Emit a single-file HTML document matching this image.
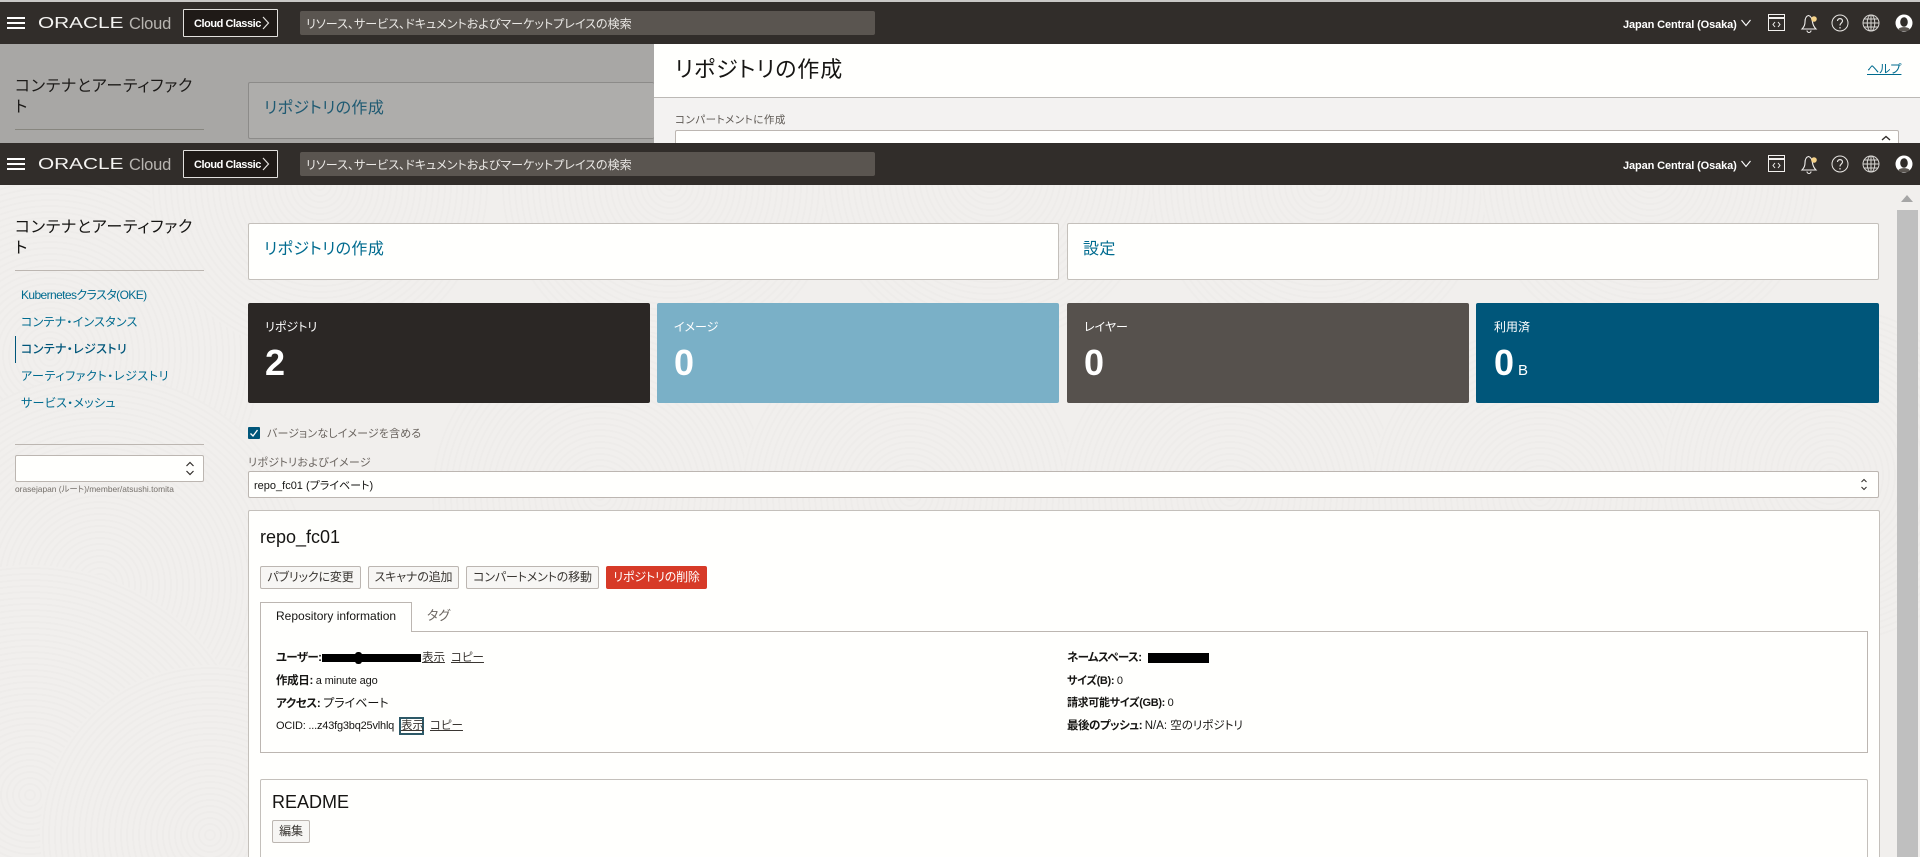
<!DOCTYPE html>
<html lang="ja"><head><meta charset="utf-8"><title>Repository</title>
<style>
html,body{margin:0;padding:0;width:1920px;height:857px;overflow:hidden;background:#f1efed}
body{position:relative;font-family:"Liberation Sans","Noto Sans CJK JP",sans-serif;font-feature-settings:"palt";color:#161513}
.a{position:absolute;box-sizing:border-box}
.t{position:absolute;white-space:nowrap;height:20px;line-height:20px}
.hd{position:absolute;left:0;width:1920px;height:42px;background:#312d2a;overflow:hidden}
.btn{position:absolute;box-sizing:border-box;top:566px;height:23px;background:#f7f6f4;border:1px solid #bcb6b1;border-radius:2px;font-size:12px;line-height:21px;text-align:center;color:#3a3632;white-space:nowrap;letter-spacing:-.15px}
.c{position:absolute;border-radius:50%;background:repeating-radial-gradient(circle,#f1efed 0 4px,#eeecea 4px 6px)}
.stat{position:absolute;top:303px;height:100px;border-radius:2px}
.nav{font-size:12px;color:#006b8f;left:21px}
.l{font-size:11.5px;font-weight:700;color:#161513;letter-spacing:-.35px}
.l span{font-weight:400;font-size:11px;letter-spacing:-.15px}
.s{font-size:12px;color:#fff}
u{color:#3a3632}
svg{position:absolute;overflow:visible}
</style></head><body>

<!-- top strip -->
<div class="a" style="left:0;top:0;width:1920px;height:2px;background:#c9c8c6"></div>

<!-- dimmed back page -->
<div class="a" style="left:0;top:44px;width:654px;height:99px;background:#a8a7a5"></div>
<div class="t" style="left:15px;top:77px;font-size:16px;color:#1c1a18;letter-spacing:.7px">コンテナとアーティファク</div>
<div class="t" style="left:15px;top:98px;font-size:16px;color:#1c1a18">ト</div>
<div class="a" style="left:15px;top:129px;width:189px;height:1px;background:#87867f"></div>
<div class="a" style="left:248px;top:82px;width:406px;height:57px;background:#aeadab;border:1px solid #8c8b89;border-right:0;border-radius:2px"></div>
<div class="t" style="left:264px;top:99px;font-size:16px;color:#1f5a72;letter-spacing:.4px">リポジトリの作成</div>

<!-- slide panel -->
<div class="a" style="left:654px;top:44px;width:1266px;height:53px;background:#fffffd"></div>
<div class="a" style="left:654px;top:97px;width:1266px;height:46px;background:#f3f2f1;border-top:1px solid #bcb9b5"></div>
<div class="t" style="left:675px;top:60px;font-size:22px;color:#161513;letter-spacing:.9px">リポジトリの作成</div>
<div class="t" style="left:1867px;top:59px;font-size:12px;color:#006b8f;text-decoration:underline">ヘルプ</div>
<div class="t" style="left:675px;top:110px;font-size:10.5px;color:#5f5a55;letter-spacing:.5px">コンパートメントに作成</div>
<div class="a" style="left:675px;top:130px;width:1224px;height:20px;background:#fffffd;border:1px solid #bcb6b1;border-radius:2px"></div>
<svg style="left:1880px;top:135px" width="12" height="6"><path d="M2 5L6 1.5L10 5" fill="none" stroke="#312d2a" stroke-width="1.4"/></svg>

<!-- first header -->
<div class="hd" style="top:2px">
  <div class="a" style="left:7px;top:15px;width:18px;height:2px;background:#fff"></div>
  <div class="a" style="left:7px;top:20px;width:18px;height:2px;background:#fff"></div>
  <div class="a" style="left:7px;top:25px;width:18px;height:2px;background:#fff"></div>
  <div class="t" style="left:38px;top:12px;font-size:15.4px;color:#f4f3f1;transform:scaleX(1.35);transform-origin:left">ORACLE</div>
  <div class="t" style="left:129px;top:12px;font-size:16.5px;color:#b8b5b1;letter-spacing:-.2px">Cloud</div>
  <div class="a" style="left:183px;top:7px;width:95px;height:28px;background:#1f1a17;border:1px solid #e2e0dd;border-radius:1px"></div>
  <div class="t" style="left:194px;top:12px;font-size:11px;font-weight:700;color:#fff;letter-spacing:-.45px">Cloud Classic</div>
  <svg style="left:262px;top:14px" width="8" height="14"><path d="M1 1L6.5 7L1 13" fill="none" stroke="#e4e2df" stroke-width="1.2"/></svg>
  <div class="a" style="left:300px;top:9px;width:575px;height:24px;background:#5a5550;border-radius:2px"></div>
  <div class="t" style="left:306px;top:12px;font-size:12px;color:#ebe9e6;letter-spacing:.05px">リソース、サービス、ドキュメントおよびマーケットプレイスの検索</div>
  <div class="t" style="left:1623px;top:13px;font-size:11px;font-weight:700;color:#fff;letter-spacing:-.12px">Japan Central (Osaka)</div>
  <svg style="left:1740px;top:17px" width="12" height="8"><path d="M1.5 1L6 6.5L10.500 1" fill="none" stroke="#fff" stroke-width="1.1"/></svg>
  <svg style="left:1768px;top:12px" width="17" height="18" fill="none" stroke="#f2f0ee" stroke-width="1"><rect x=".5" y=".5" width="16" height="16"/><path d="M1 4H16" stroke-width="2"/><path d="M7 8L5 10.5L7 13M10 8L12 10.5L10 13"/></svg>
  <svg style="left:1800px;top:11px" width="20" height="21" fill="none" stroke="#f2f0ee" stroke-width="1.1"><path d="M2 16C4 14 5 12 5 9C5 5 6.500 3 8.500 2.500C10.500 3 12 5 12.500 9C13 12 14 14 16 16Z"/><path d="M7 17.500a2 2 0 0 0 4 0"/><circle cx="14" cy="6" r="2.800" fill="#f5d28a" stroke="none"/></svg>
  <svg style="left:1831px;top:12px" width="18" height="18" fill="none" stroke="#e8e6e3" stroke-width="1"><circle cx="9" cy="9" r="8"/><path d="M6.500 7C6.500 3.800 11.500 3.800 11.500 7C11.500 9 9 9 9 11.500M9 13V14.500" stroke-width="1.200"/></svg>
  <svg style="left:1862px;top:12px" width="18" height="18" fill="none" stroke="#d8d6d3" stroke-width="1"><circle cx="9" cy="9" r="8"/><ellipse cx="9" cy="9" rx="3.800" ry="8"/><path d="M9 1V17M1 9H17M2 5H16M2 13H16"/></svg>
  <svg style="left:1895px;top:12px" width="18" height="18"><circle cx="9" cy="9" r="8.500" fill="#fff"/><ellipse cx="9" cy="8" rx="3.800" ry="4.800" fill="#312d2a"/><path d="M3.500 15C5 12.500 13 12.500 14.500 15L13 17H5Z" fill="#5a5550"/></svg>
</div>

<!-- main page background texture -->
<div class="a" style="left:0;top:185px;width:1920px;height:672px;background:#f1efed;overflow:hidden">
  <div class="c" style="left:-160px;top:-40px;width:420px;height:420px"></div>
  <div class="c" style="left:-110px;top:190px;width:420px;height:420px"></div>
  <div class="c" style="left:-200px;top:380px;width:460px;height:460px"></div>
  <div class="c" style="left:40px;top:480px;width:340px;height:340px"></div>
  <div class="c" style="left:150px;top:-170px;width:340px;height:340px"></div>
  <div class="c" style="left:500px;top:-170px;width:340px;height:340px"></div>
  <div class="c" style="left:820px;top:-180px;width:340px;height:340px"></div>
  <div class="c" style="left:1150px;top:-170px;width:340px;height:340px"></div>
  <div class="c" style="left:1480px;top:-180px;width:340px;height:340px"></div>
  <div class="c" style="left:430px;top:140px;width:340px;height:340px"></div>
  <div class="c" style="left:740px;top:140px;width:340px;height:340px"></div>
  <div class="c" style="left:1060px;top:140px;width:340px;height:340px"></div>
  <div class="c" style="left:1370px;top:140px;width:340px;height:340px"></div>
  <div class="c" style="left:1660px;top:120px;width:340px;height:340px"></div>
</div>

<!-- second header -->
<div class="hd" style="top:143px">
  <div class="a" style="left:7px;top:15px;width:18px;height:2px;background:#fff"></div>
  <div class="a" style="left:7px;top:20px;width:18px;height:2px;background:#fff"></div>
  <div class="a" style="left:7px;top:25px;width:18px;height:2px;background:#fff"></div>
  <div class="t" style="left:38px;top:12px;font-size:15.4px;color:#f4f3f1;transform:scaleX(1.35);transform-origin:left">ORACLE</div>
  <div class="t" style="left:129px;top:12px;font-size:16.5px;color:#b8b5b1;letter-spacing:-.2px">Cloud</div>
  <div class="a" style="left:183px;top:7px;width:95px;height:28px;background:#1f1a17;border:1px solid #e2e0dd;border-radius:1px"></div>
  <div class="t" style="left:194px;top:12px;font-size:11px;font-weight:700;color:#fff;letter-spacing:-.45px">Cloud Classic</div>
  <svg style="left:262px;top:14px" width="8" height="14"><path d="M1 1L6.5 7L1 13" fill="none" stroke="#e4e2df" stroke-width="1.2"/></svg>
  <div class="a" style="left:300px;top:9px;width:575px;height:24px;background:#5a5550;border-radius:2px"></div>
  <div class="t" style="left:306px;top:12px;font-size:12px;color:#ebe9e6;letter-spacing:.05px">リソース、サービス、ドキュメントおよびマーケットプレイスの検索</div>
  <div class="t" style="left:1623px;top:13px;font-size:11px;font-weight:700;color:#fff;letter-spacing:-.12px">Japan Central (Osaka)</div>
  <svg style="left:1740px;top:17px" width="12" height="8"><path d="M1.5 1L6 6.5L10.500 1" fill="none" stroke="#fff" stroke-width="1.1"/></svg>
  <svg style="left:1768px;top:12px" width="17" height="18" fill="none" stroke="#f2f0ee" stroke-width="1"><rect x=".5" y=".5" width="16" height="16"/><path d="M1 4H16" stroke-width="2"/><path d="M7 8L5 10.5L7 13M10 8L12 10.5L10 13"/></svg>
  <svg style="left:1800px;top:11px" width="20" height="21" fill="none" stroke="#f2f0ee" stroke-width="1.1"><path d="M2 16C4 14 5 12 5 9C5 5 6.500 3 8.500 2.500C10.500 3 12 5 12.500 9C13 12 14 14 16 16Z"/><path d="M7 17.500a2 2 0 0 0 4 0"/><circle cx="14" cy="6" r="2.800" fill="#f5d28a" stroke="none"/></svg>
  <svg style="left:1831px;top:12px" width="18" height="18" fill="none" stroke="#e8e6e3" stroke-width="1"><circle cx="9" cy="9" r="8"/><path d="M6.500 7C6.500 3.800 11.500 3.800 11.500 7C11.500 9 9 9 9 11.500M9 13V14.500" stroke-width="1.200"/></svg>
  <svg style="left:1862px;top:12px" width="18" height="18" fill="none" stroke="#d8d6d3" stroke-width="1"><circle cx="9" cy="9" r="8"/><ellipse cx="9" cy="9" rx="3.800" ry="8"/><path d="M9 1V17M1 9H17M2 5H16M2 13H16"/></svg>
  <svg style="left:1895px;top:12px" width="18" height="18"><circle cx="9" cy="9" r="8.500" fill="#fff"/><ellipse cx="9" cy="8" rx="3.800" ry="4.800" fill="#312d2a"/><path d="M3.500 15C5 12.500 13 12.500 14.500 15L13 17H5Z" fill="#5a5550"/></svg>
</div>

<!-- scrollbar -->
<svg style="left:1901px;top:195px" width="12" height="7"><path d="M0 7L6 0L12 7Z" fill="#a6a6a6"/></svg>
<div class="a" style="left:1897px;top:210px;width:21px;height:647px;background:#bfbfbf"></div>

<!-- sidebar -->
<div class="t" style="left:15px;top:218px;font-size:16px;color:#161513;letter-spacing:.7px">コンテナとアーティファク</div>
<div class="t" style="left:15px;top:239px;font-size:16px;color:#161513">ト</div>
<div class="a" style="left:15px;top:270px;width:189px;height:1px;background:#bcb6b1"></div>
<div class="t nav" style="top:285px;letter-spacing:-.6px">Kubernetesクラスタ(OKE)</div>
<div class="t nav" style="top:312px;letter-spacing:.25px">コンテナ・インスタンス</div>
<div class="a" style="left:15px;top:336px;width:1px;height:27px;background:#00567a"></div>
<div class="t nav" style="top:339px;color:#00567a;font-weight:500;letter-spacing:.35px">コンテナ・レジストリ</div>
<div class="t nav" style="top:366px;letter-spacing:.6px">アーティファクト・レジストリ</div>
<div class="t nav" style="top:393px;letter-spacing:.3px">サービス・メッシュ</div>
<div class="a" style="left:15px;top:444px;width:189px;height:1px;background:#bcb6b1"></div>
<div class="a" style="left:15px;top:455px;width:189px;height:27px;background:#fffffd;border:1px solid #bcb6b1;border-radius:2px"></div>
<svg style="left:185px;top:461px" width="10" height="15" fill="none" stroke="#312d2a" stroke-width="1.200"><path d="M1.500 5L5 1.500L8.500 5M1.500 10L5 13.500L8.500 10"/></svg>
<div class="t" style="left:15px;top:479px;font-size:8.4px;color:#75706b">orasejapan (ルート)/member/atsushi.tomita</div>

<!-- top cards -->
<div class="a" style="left:248px;top:223px;width:811px;height:57px;background:#fffffd;border:1px solid #c4c0bb;border-radius:2px"></div>
<div class="t" style="left:264px;top:240px;font-size:16px;color:#006b8f;letter-spacing:.4px">リポジトリの作成</div>
<div class="a" style="left:1067px;top:223px;width:812px;height:57px;background:#fffffd;border:1px solid #c4c0bb;border-radius:2px"></div>
<div class="t" style="left:1083px;top:240px;font-size:16px;color:#006b8f;letter-spacing:.4px">設定</div>

<!-- stats -->
<div class="stat" style="left:248px;width:402px;background:#2b2725"></div>
<div class="t s" style="left:265px;top:317px">リポジトリ</div>
<div class="t" style="left:265px;top:353px;font-size:36px;font-weight:700;color:#fff">2</div>
<div class="stat" style="left:657px;width:402px;background:#7ab0c7"></div>
<div class="t s" style="left:674px;top:317px">イメージ</div>
<div class="t" style="left:674px;top:353px;font-size:36px;font-weight:700;color:#fff">0</div>
<div class="stat" style="left:1067px;width:402px;background:#56514d"></div>
<div class="t s" style="left:1084px;top:317px">レイヤー</div>
<div class="t" style="left:1084px;top:353px;font-size:36px;font-weight:700;color:#fff">0</div>
<div class="stat" style="left:1476px;width:403px;background:#00567a"></div>
<div class="t s" style="left:1494px;top:317px">利用済</div>
<div class="t" style="left:1494px;top:353px;font-size:36px;font-weight:700;color:#fff">0</div>
<div class="t" style="left:1518px;top:361px;font-size:15px;color:#fff">B</div>

<!-- checkbox + select -->
<div class="a" style="left:248px;top:427px;width:12px;height:12px;background:#00567a;border-radius:1px"></div>
<svg style="left:248px;top:427px" width="12" height="12"><path d="M2.500 6.500L5 9L9.500 3" fill="none" stroke="#fff" stroke-width="1.300"/></svg>
<div class="t" style="left:267px;top:424px;font-size:11px;color:#6b6560;letter-spacing:.12px">バージョンなしイメージを含める</div>
<div class="t" style="left:248px;top:453px;font-size:11px;color:#6b6560;letter-spacing:.3px">リポジトリおよびイメージ</div>
<div class="a" style="left:248px;top:471px;width:1631px;height:27px;background:#fffffd;border:1px solid #bcb6b1;border-radius:2px"></div>
<div class="t" style="left:254px;top:476px;font-size:11px;color:#161513">repo_fc01 (プライベート)</div>
<svg style="left:1859px;top:477px" width="10" height="15" fill="none" stroke="#312d2a" stroke-width="1"><path d="M2.500 5L5 2.500L7.500 5M2.500 10L5 12.500L7.500 10"/></svg>

<!-- details box -->
<div class="a" style="left:248px;top:510px;width:1632px;height:347px;background:#fffffd;border:1px solid #c4c0bb;border-bottom:0;border-radius:2px 2px 0 0"></div>
<div class="t" style="left:260px;top:527px;font-size:18px;color:#161513">repo_fc01</div>
<div class="btn" style="left:260px;width:101px">パブリックに変更</div>
<div class="btn" style="left:368px;width:91px">スキャナの追加</div>
<div class="btn" style="left:466px;width:133px">コンパートメントの移動</div>
<div class="btn" style="left:606px;width:101px;background:#d73a27;border-color:#d73a27;color:#fff">リポジトリの削除</div>

<!-- tab -->
<div class="a" style="left:260px;top:631px;width:1608px;height:122px;border:1px solid #bcb6b1"></div>
<div class="a" style="left:260px;top:602px;width:152px;height:30px;background:#fffffd;border:1px solid #bcb6b1;border-bottom:0"></div>
<div class="t" style="left:276px;top:606px;font-size:12px;color:#161513">Repository information</div>
<div class="t" style="left:427px;top:606px;font-size:13px;color:#6b6560">タグ</div>

<div class="t l" style="left:276px;top:648px;letter-spacing:-.6px">ユーザー:</div>
<div class="a" style="left:322px;top:654px;width:99px;height:8px;background:#000"></div>
<div class="a" style="left:355px;top:652px;width:7px;height:12px;background:#000;border-radius:3px"></div>
<div class="t" style="left:422px;top:648px;font-size:11.5px"><u>表示</u></div>
<div class="t" style="left:451px;top:648px;font-size:11.5px"><u>コピー</u></div>
<div class="t l" style="left:276px;top:671px">作成日: <span>a minute ago</span></div>
<div class="t l" style="left:276px;top:693px">アクセス: <span style="font-size:12px;letter-spacing:0">プライベート</span></div>
<div class="t" style="left:276px;top:716px;font-size:11px;letter-spacing:-.2px;color:#161513">OCID: ...z43fg3bq25vlhlq</div>
<div class="a" style="left:399px;top:717px;width:25px;height:18px;border:2px solid #2d5967"></div>
<div class="t" style="left:401px;top:716px;font-size:11.5px"><u>表示</u></div>
<div class="t" style="left:430px;top:716px;font-size:11.5px"><u>コピー</u></div>

<div class="t l" style="left:1067px;top:648px;letter-spacing:-.6px">ネームスペース:</div>
<div class="a" style="left:1148px;top:653px;width:61px;height:10px;background:#000"></div>
<div class="t l" style="left:1067px;top:671px;font-size:11px">サイズ(B): <span>0</span></div>
<div class="t l" style="left:1067px;top:693px;font-size:11px">請求可能サイズ(GB): <span>0</span></div>
<div class="t l" style="left:1067px;top:716px;letter-spacing:-.5px">最後のプッシュ: <span style="font-size:11.5px;letter-spacing:0">N/A: 空のリポジトリ</span></div>

<!-- readme -->
<div class="a" style="left:260px;top:779px;width:1608px;height:78px;border:1px solid #c4c0bb;border-bottom:0;border-radius:2px 2px 0 0"></div>
<div class="t" style="left:272px;top:792px;font-size:18px;color:#161513">README</div>
<div class="btn" style="left:272px;top:820px;width:38px">編集</div>

</body></html>
